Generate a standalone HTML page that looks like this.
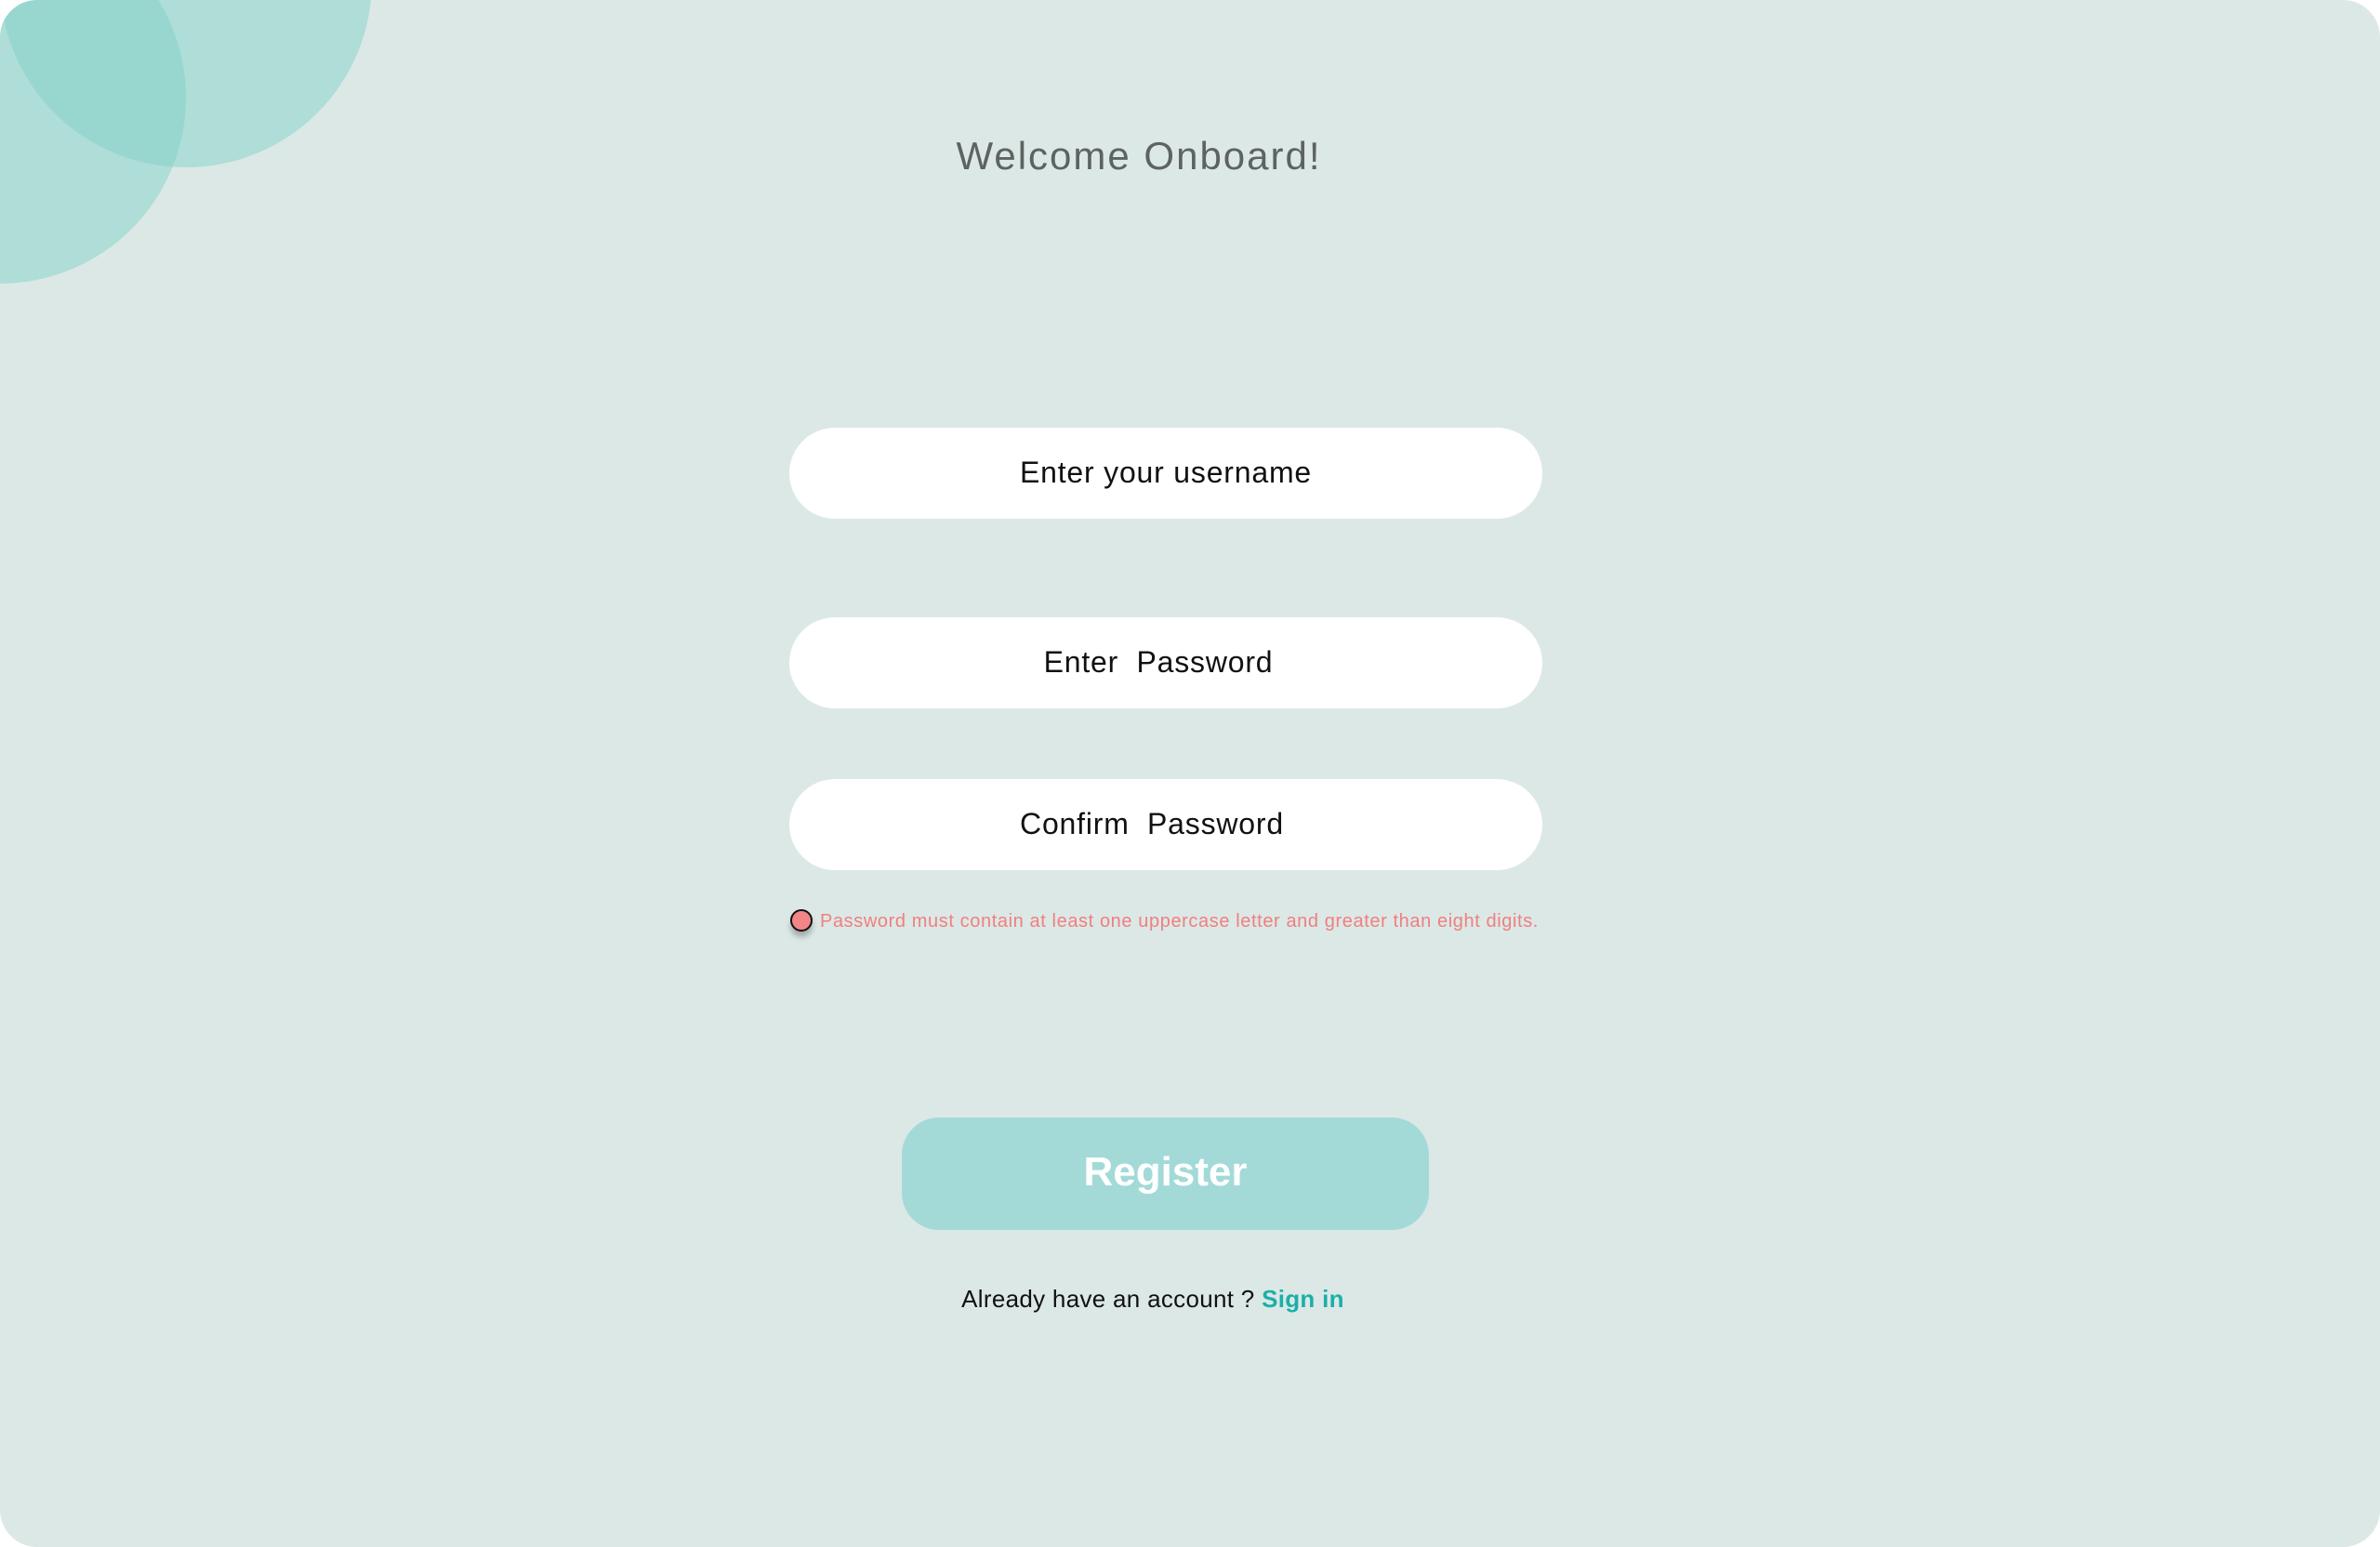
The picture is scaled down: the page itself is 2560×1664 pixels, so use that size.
<!DOCTYPE html>
<html><head><meta charset="utf-8"><style>
html,body{margin:0;padding:0;background:#fff;}
body{width:2560px;height:1664px;overflow:hidden;position:relative;font-family:"Liberation Sans",sans-serif;}
.page{position:absolute;left:0;top:0;width:2560px;height:1664px;background:#dce8e6;border-radius:40px;overflow:hidden;}
.c{position:absolute;width:400px;height:400px;border-radius:50%;background:rgba(130,210,200,0.5);}
.title{position:absolute;left:0;width:2450px;top:144px;text-align:center;font-size:42px;color:#5d6361;letter-spacing:2px;}
.inp{position:absolute;left:849px;width:810px;height:98px;background:#fff;border-radius:49px;text-align:center;font-size:32px;color:#111;line-height:96px;letter-spacing:0.8px;}
.err{position:absolute;left:850px;top:979px;font-size:20px;color:#f07f7f;line-height:24px;white-space:nowrap;letter-spacing:0.6px;}
.dot{position:absolute;left:850px;top:978px;width:20px;height:20px;border-radius:50%;background:#f28585;border:2px solid #111;box-shadow:0 6px 6px rgba(0,0,0,0.25);}
.btn{position:absolute;left:970px;top:1202px;width:567px;height:121px;background:#a3dad8;border-radius:40px;text-align:center;line-height:118px;font-size:44px;font-weight:bold;color:#fff;}
.foot{position:absolute;left:0;width:2480px;top:1382px;text-align:center;font-size:26px;color:#111;letter-spacing:0.3px;}
.foot b{color:#1ab0a8;}
</style></head><body>
<div class="page">
<div class="c" style="left:0;top:-220px;"></div>
<div class="c" style="left:-200px;top:-95px;"></div>
<div class="title">Welcome Onboard!</div>
<div class="inp" style="top:460px;">Enter your username</div>
<div class="inp" style="top:664px;padding-right:16px;width:794px;">Enter&nbsp; Password</div>
<div class="inp" style="top:838px;padding-right:30px;width:780px;">Confirm&nbsp; Password</div>
<div class="dot"></div>
<div class="err" style="left:882px;">Password must contain at least one uppercase letter and greater than eight digits.</div>
<div class="btn">Register</div>
<div class="foot">Already have an account ? <b>Sign in</b></div>
</div>
</body></html>
